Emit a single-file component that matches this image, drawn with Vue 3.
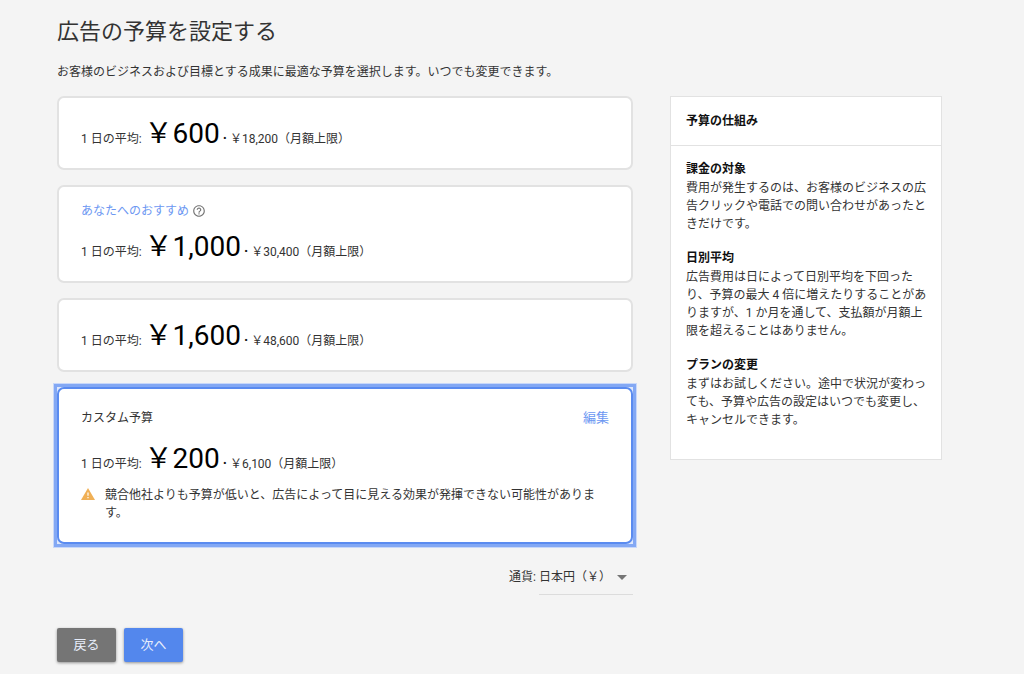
<script setup>
import { ref } from 'vue'

const selected = ref('custom')
const currency = ref('JPY')

const plans = [
  { id: 'low', daily: '600', monthly: '18,200' },
  { id: 'mid', daily: '1,000', monthly: '30,400', recommended: true },
  { id: 'high', daily: '1,600', monthly: '48,600' },
  { id: 'custom', daily: '200', monthly: '6,100', custom: true }
]

const notes = [
  {
    title: '課金の対象',
    body: '費用が発生するのは、お客様のビジネスの広告クリックや電話での問い合わせがあったときだけです。'
  },
  {
    title: '日別平均',
    body: '広告費用は日によって日別平均を下回ったり、予算の最大 4 倍に増えたりすることがありますが、1 か月を通して、支払額が月額上限を超えることはありません。'
  },
  {
    title: 'プランの変更',
    body: 'まずはお試しください。途中で状況が変わっても、予算や広告の設定はいつでも変更し、キャンセルできます。'
  }
]
</script>

<template>
  <main class="page" lang="ja">
    <h1 class="title">広告の予算を設定する</h1>
    <p class="lead">お客様のビジネスおよび目標とする成果に最適な予算を選択します。いつでも変更できます。</p>

    <div class="columns">
      <section class="main">
        <div class="plans">
          <div
            v-for="plan in plans"
            :key="plan.id"
            class="frame"
            :class="{ active: selected === plan.id }"
          >
            <div class="card" :class="{ roomy: plan.custom }">
              <div v-if="plan.recommended" class="recommend">
                <span>あなたへのおすすめ</span>
                <button type="button" class="help" aria-label="ヘルプ">
                  <svg viewBox="0 0 24 24" width="14" height="14" aria-hidden="true">
                    <path fill="#757575" d="M11 18h2v-2h-2v2zm1-16C6.48 2 2 6.48 2 12s4.48 10 10 10 10-4.48 10-10S17.52 2 12 2zm0 18c-4.41 0-8-3.59-8-8s3.59-8 8-8 8 3.59 8 8-3.59 8-8 8zm0-14c-2.21 0-4 1.79-4 4h2c0-1.1.9-2 2-2s2 .9 2 2c0 2-3 1.75-3 5h2c0-2.25 3-2.5 3-5 0-2.21-1.79-4-4-4z" />
                  </svg>
                </button>
              </div>
              <div v-if="plan.custom" class="custom-head">
                <span>カスタム予算</span>
                <a href="#" class="edit">編集</a>
              </div>
              <label class="price">
                <input v-model="selected" class="radio" type="radio" name="budget" :value="plan.id" />
                <span>1 日の平均: <span class="amount">￥{{ plan.daily }}</span> <b class="dot">·</b> ￥{{ plan.monthly }}（月額上限）</span>
              </label>
              <div v-if="plan.custom" class="warning">
                <svg class="warn-icon" viewBox="0 0 14 12" width="14" height="12" aria-hidden="true">
                  <path fill="#f0b056" d="M7 0l7 12H0z" />
                  <path fill="#fff" d="M6.4 4.5h1.2v3.3H6.4zM6.4 8.9h1.2v1.3H6.4z" />
                </svg>
                <p>競合他社よりも予算が低いと、広告によって目に見える効果が発揮できない可能性があります。</p>
              </div>
            </div>
          </div>
        </div>

        <div class="currency">
          <label for="currency">通貨:</label>
          <div class="select-box">
            <select id="currency" v-model="currency">
              <option value="JPY">日本円（￥）</option>
            </select>
            <svg class="caret" viewBox="0 0 10 5" width="10" height="5" aria-hidden="true">
              <path fill="#757575" d="M0 0h10L5 5z" />
            </svg>
          </div>
        </div>
      </section>

      <aside class="side">
        <h2>予算の仕組み</h2>
        <div class="notes">
          <section v-for="note in notes" :key="note.title">
            <h3>{{ note.title }}</h3>
            <p>{{ note.body }}</p>
          </section>
        </div>
      </aside>
    </div>

    <div class="actions">
      <button type="button" class="btn back">戻る</button>
      <button type="button" class="btn next">次へ</button>
    </div>
  </main>
</template>

<style>
body {
  background: #f4f4f4;
}
</style>

<style scoped>
.page {
  box-sizing: border-box;
  padding: 17px 82px 12px 57px;
  font-family: Roboto, "Noto Sans CJK JP", sans-serif;
  font-size: 12px;
  line-height: 18px;
  color: #333;
}
.page * {
  box-sizing: border-box;
}
h1,
h2,
h3,
p {
  margin: 0;
}
.title {
  font-size: 22px;
  line-height: 30px;
  font-weight: 400;
}
.lead {
  margin-top: 16px;
}
.columns {
  display: grid;
  grid-template-columns: minmax(0, 576fr) minmax(0, 272fr);
  gap: 37px;
  align-items: start;
  margin-top: 15px;
}
.plans {
  display: grid;
  gap: 15px;
}
.card {
  padding: 19px 22px 12px;
  border: 2px solid #e2e2e2;
  border-radius: 7px;
  background: #fff;
}
.roomy {
  padding: 20px 22px;
}
.active {
  background: #dfe8fb;
  box-shadow: 0 0 0 3px #83a8f4, 0 0 0 4px #c8d8fa;
}
.active .card {
  border-color: #5a8bf0;
}
.recommend {
  display: flex;
  align-items: center;
  gap: 3px;
  height: 24px;
  margin-top: -7px;
  margin-bottom: 7px;
  color: #6d98f2;
}
.help {
  display: flex;
  padding: 0;
  border: 0;
  background: none;
}
.custom-head {
  display: flex;
  justify-content: space-between;
  margin-bottom: 15px;
}
.edit {
  font-size: 13px;
  color: #6d98f2;
  text-decoration: none;
}
.price {
  display: block;
  line-height: 34px;
}
.radio {
  position: absolute;
  margin: 0;
  opacity: 0;
  pointer-events: none;
}
.amount {
  font-size: 28px;
  color: #000;
}
.dot {
  font-size: 14px;
  font-weight: 700;
  color: #111;
}
.warning {
  display: flex;
  gap: 10px;
  margin-top: 5px;
}
.warn-icon {
  flex: none;
  margin-top: 2px;
}
.currency {
  display: flex;
  justify-content: flex-end;
  gap: 3px;
  margin-top: 16px;
  line-height: 34px;
}
.select-box {
  display: grid;
  align-items: center;
  width: 94px;
  border-bottom: 1px solid #dcdcdc;
}
.select-box > * {
  grid-area: 1 / 1;
}
.select-box select {
  width: 100%;
  height: 34px;
  padding: 0;
  border: 0;
  appearance: none;
  background: none;
  font: inherit;
  color: inherit;
}
.caret {
  justify-self: end;
  margin-right: 6px;
  pointer-events: none;
}
.side {
  border: 1px solid #e2e2e2;
  background: #fff;
}
.side h2 {
  padding: 15px;
  border-bottom: 1px solid #e2e2e2;
  font-size: 12px;
  line-height: 18px;
  font-weight: 700;
  color: #111;
}
.notes {
  display: grid;
  gap: 16px;
  padding: 14px 12px 30px 15px;
}
.notes h3 {
  font-size: 12px;
  line-height: 19px;
  font-weight: 700;
  color: #111;
}
.actions {
  display: flex;
  gap: 8px;
  margin-top: 33px;
}
.btn {
  width: 59px;
  height: 34px;
  padding: 0;
  border: 0;
  border-radius: 2px;
  box-shadow: 0 1px 3px rgba(0, 0, 0, 0.4);
  font: inherit;
  font-size: 13px;
  color: #e8eefb;
}
.back {
  background: #757575;
}
.next {
  background: #5387ed;
}
</style>
